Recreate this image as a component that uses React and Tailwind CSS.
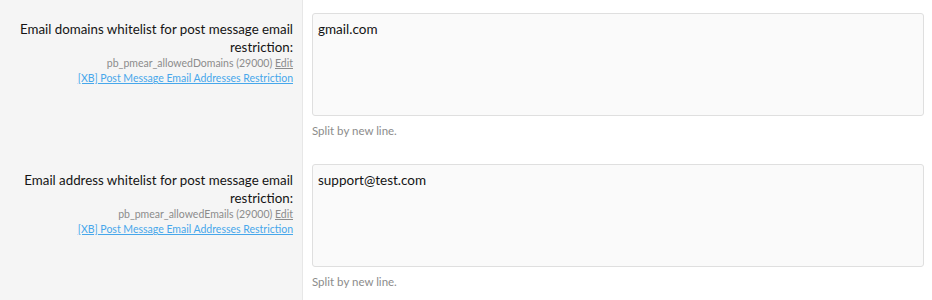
import React from 'react';

const ROWS = [
  {
    label: 'Email domains whitelist for post message email restriction:',
    option: 'pb_pmear_allowedDomains (29000)',
    value: 'gmail.com',
  },
  {
    label: 'Email address whitelist for post message email restriction:',
    option: 'pb_pmear_allowedEmails (29000)',
    value: 'support@test.com',
  },
];

function OptionRow({ row }) {
  return (
    <div className="flex">
      <div className="w-[303px] shrink-0 bg-[#f5f5f5] border-r border-[#e7e7e7] pl-[14px] pr-[9px] pt-[20px] text-right">
        <div className="text-[13.3px] leading-[18px] text-[#141414]">{row.label}</div>
        <div className="text-[10.5px] leading-[15px] text-[#8c8c8c]">
          {row.option} <a href="#" className="underline text-[#8c8c8c]">Edit</a>
        </div>
        <div className="text-[10.5px] leading-[15px]">
          <a href="#" className="underline text-[#47a7eb]">[XB] Post Message Email Addresses Restriction</a>
        </div>
      </div>
      <div className="flex-1 pl-[9px] pr-2 pt-[13px] pb-[13px]">
        <textarea
          readOnly
          value={row.value}
          className="block w-full h-[103px] resize-none rounded-[3px] border border-[#dfdfdf] bg-[#fafafa] px-[5px] py-[6px] text-[13.5px] leading-[18px] text-[#141414] outline-none"
        />
        <div className="mt-[8px] text-[11.5px] leading-[14px] text-[#8c8c8c]">Split by new line.</div>
      </div>
    </div>
  );
}

export default function App() {
  return (
    <div className="w-[932px] h-[300px] overflow-hidden bg-white font-['Lato',sans-serif]">
      {ROWS.map((row, i) => (
        <OptionRow key={i} row={row} />
      ))}
    </div>
  );
}
